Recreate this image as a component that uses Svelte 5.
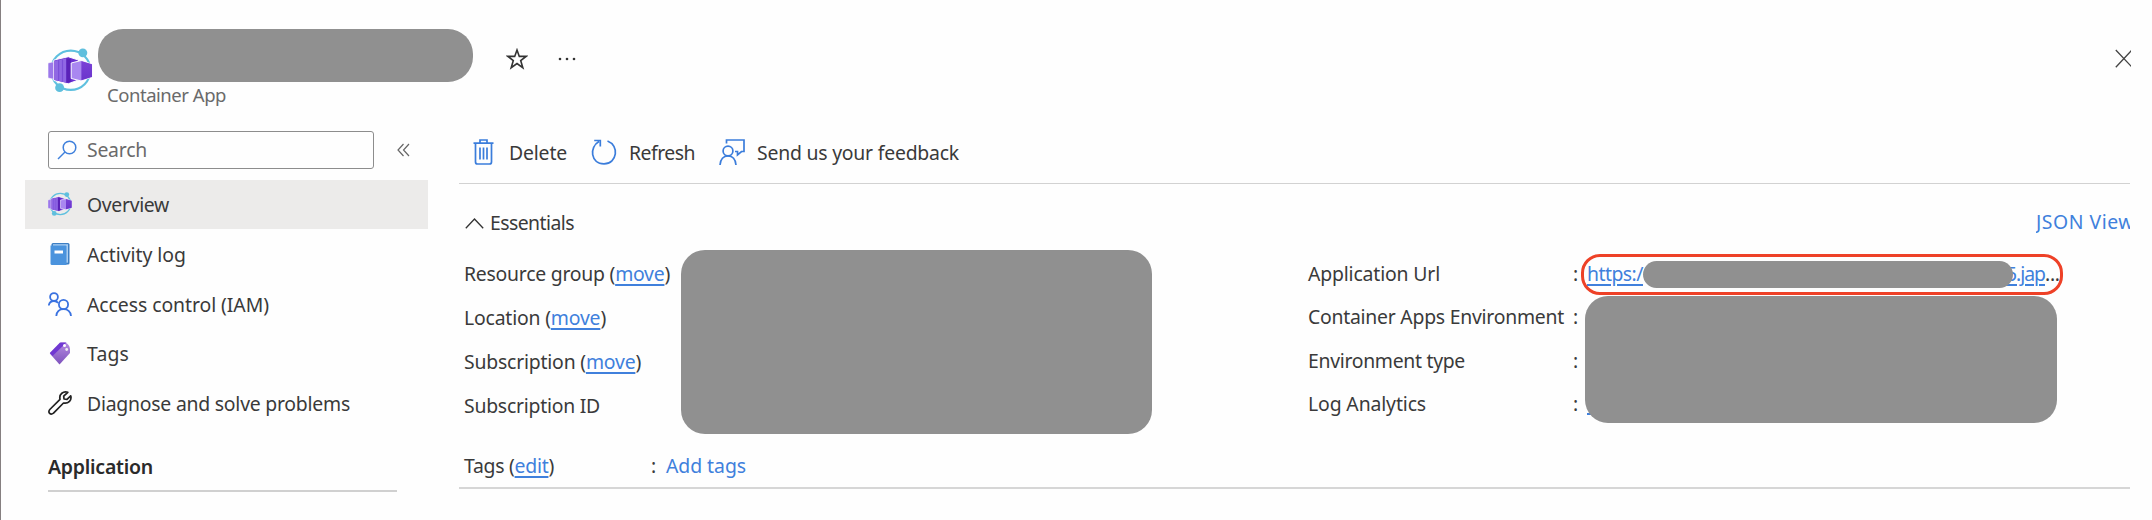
<script lang="ts">
  const menu = [
    { label: 'Overview', icon: 'app', width: 82, active: true },
    { label: 'Activity log', icon: 'log', width: 99 },
    { label: 'Access control (IAM)', icon: 'people', width: 182 },
    { label: 'Tags', icon: 'tag', width: 42 },
    { label: 'Diagnose and solve problems', icon: 'wrench', width: 263 },
  ];
  const left = [
    { label: 'Resource group', action: 'move', width: 206 },
    { label: 'Location', action: 'move', width: 142 },
    { label: 'Subscription', action: 'move', width: 177 },
    { label: 'Subscription ID', width: 136 },
  ];
  const right = [
    { label: 'Application Url', width: 132 },
    { label: 'Container Apps Environment', width: 256 },
    { label: 'Environment type', width: 157 },
    { label: 'Log Analytics', width: 118 },
  ];

  // Tracks a run of text so that it takes up the given width.
  function fit(node: HTMLElement, width: number) {
    const now = node.getBoundingClientRect().width;
    const count = (node.textContent ?? '').length;
    node.style.letterSpacing = `${(width - now) / count}px`;
  }
</script>

{#snippet appIcon(size)}
  <svg width={size} height={size} viewBox="0 0 46 46">
    <defs>
      <linearGradient id="front" x1="0" x2="0" y1="0" y2="1"><stop offset="0" stop-color="#7a42d6" /><stop offset="1" stop-color="#6a35cc" /></linearGradient>
    </defs>
    <circle cx="23.5" cy="23" r="20.3" fill="none" stroke="#5fc0df" stroke-width="2.2" />
    <path d="M0 15.500 7 14V32.500L0 31Z" fill="#9c78ea" stroke="#fff" stroke-width=".6" />
    <path d="M6 12.500 21 9 31.500 12.500V33L21 37 6 33.500Z" fill="#6a2fd0" stroke="#fff" stroke-width="1" />
    <path d="M7 13.300 19 10.500V35.800L7 33Z" fill="#9068e4" />
    <path d="M19 10.500 23.500 11.500V35L19 35.800Z" fill="#5a22b8" />
    <path d="M11 12.500V34M15 11.500V35" stroke="#7b4fd9" stroke-width="1.200" />
    <path d="M24 15.500 34 13 45.500 16.500V30L34 34 24 31.500Z" fill="#a987f0" stroke="#fff" stroke-width="1" />
    <path d="M34.500 13.500 45.500 16.800V30L34.500 33.300Z" fill="url(#front)" />
    <circle cx="36" cy="5" r="4.600" fill="#5fbfdd" />
    <circle cx="12" cy="41" r="4.600" fill="#5fbfdd" />
  </svg>
{/snippet}

<div class="page">
  <header>
    <div class="logo">{@render appIcon(44.5)}</div>
    <div class="heading">
      <div class="mask name"></div>
      <div class="kind"><span use:fit={119}>Container App</span></div>
    </div>
    <svg class="star" width="22" height="22" viewBox="0 0 22 22"><path d="M11 2 13.300 8.400H20.100L14.700 12.600 16.800 19.700 11 15.500 5.200 19.700 7.300 12.600 1.900 8.400H8.700Z" fill="none" stroke="#333" stroke-width="1.600" /></svg>
    <svg class="dots" width="20" height="4" viewBox="0 0 20 4" fill="#333"><circle cx="3" cy="2" r="1.300" /><circle cx="10" cy="2" r="1.300" /><circle cx="17" cy="2" r="1.300" /></svg>
    <svg class="close" width="16" height="20" viewBox="0 0 16 20"><path d="M.8 1 17 18.200M.8 18.200 17 1" stroke="#444" stroke-width="1.300" /></svg>
  </header>

  <div class="body">
    <nav>
      <div class="searchline">
        <div class="search">
          <svg width="20" height="20" viewBox="0 0 20 20" fill="none" stroke="#3f80dc" stroke-width="1.500"><circle cx="12.500" cy="7.500" r="6.300" /><path d="M8 12 1 19" /></svg>
          <span use:fit={60}>Search</span>
        </div>
        <svg class="collapse" width="13" height="14" viewBox="0 0 13 14" fill="none" stroke="#666" stroke-width="1.200"><path d="M6.500 1 1 7l5.500 6M12 1 6.500 7l5.500 6" /></svg>
      </div>
      <ul>
        {#each menu as item}
          <li class:active={item.active}>
            <span class="ico">
              {#if item.icon === 'app'}
                {@render appIcon(24)}
              {:else if item.icon === 'log'}
                <svg width="24" height="24" viewBox="0 0 24 24"><rect x="3.500" y="1" width="18" height="21.500" rx="1.500" fill="#3d7fc4" /><rect x="5" y="2.200" width="15" height="18.500" fill="#a9cdf0" /><path d="M2.500 3.500H17.500Q18.500 3.500 18.500 4.500V23H4Q2.500 23 2.500 21.500Z" fill="#4a93dd" /><rect x="6.500" y="8.500" width="8.500" height="3" fill="#fff" /></svg>
              {:else if item.icon === 'people'}
                <svg width="24" height="24" viewBox="0 0 24 24" fill="none" stroke="#3a72e0" stroke-width="1.800"><circle cx="6" cy="5" r="3.900" /><path d="M.8 13.500C1.200 10.500 3.200 9 6 9 8 9 9.300 9.800 10.200 11" /><circle cx="15.500" cy="12.500" r="4.600" /><path d="M8.300 24C8.800 19.500 11.500 17.200 15.500 17.200S22.400 19.500 23 24" /></svg>
              {:else if item.icon === 'tag'}
                <svg width="24" height="24" viewBox="0 0 24 24"><defs><linearGradient id="tag" x1="0" x2="0" y1="0" y2="1"><stop offset="0" stop-color="#b48be0" /><stop offset="1" stop-color="#7e52bd" /></linearGradient></defs><path d="M13 1.500H17Q21.500 3 22 8V12L11.500 23.500 1.800 12.500Z" fill="url(#tag)" /><path d="M1.800 12 12 1.500H18.500L4.500 15Z" fill="#7038d2" /><circle cx="16.500" cy="4.500" r="1.500" fill="#fff" /><circle cx="18.700" cy="8.500" r="1.400" fill="#eee" /></svg>
              {:else}
                <svg width="24" height="24" viewBox="0 0 24 24" fill="none" stroke="#222" stroke-width="1.700" stroke-linejoin="round"><path d="M19.800 1.300C15.500-.2 10.800 3 12 8.300L1.800 18.500C-.5 21.500 2.500 24.500 5.500 22.200L15.500 12C20.500 13 24 9 22.700 4.800L19 8.300 16 8 15.700 5.200Z" /></svg>
              {/if}
            </span>
            <span class="txt" use:fit={item.width}>{item.label}</span>
          </li>
        {/each}
      </ul>
      <h2><span use:fit={105}>Application</span></h2>
    </nav>

    <main>
      <div class="toolbar">
        <svg width="21" height="26" viewBox="0 0 21 26" fill="none" stroke="#3b7ddb" stroke-width="1.700"><path d="M.5 4.200H20.500M7 4V1H14V4M2.500 4.500V23Q2.500 25 4.500 25H16.500Q18.500 25 18.500 23V4.500M7 8.500V20.500M10.500 8.500V20.500M14 8.500V20.500" /></svg>
        <span class="t1" use:fit={58}>Delete</span>
        <svg class="i2" width="26" height="26" viewBox="0 0 26 26" fill="none" stroke="#3b7ddb" stroke-width="1.700"><path d="M8 2.500C-2 8-.5 24.800 13 24.900 26.500 24.500 28.500 6.500 16.500 2M3.200 1.500H9.300V7.500" /></svg>
        <span class="t2" use:fit={66}>Refresh</span>
        <svg class="i3" width="26" height="26" viewBox="0 0 26 26" fill="none" stroke="#3b7ddb" stroke-width="1.700"><circle cx="9" cy="12" r="4.900" /><path d="M1 26C1.500 20.500 4.500 17 9 17S16.500 20.500 17 26M7.500 4.500V1H25V12.500H22.500L18.500 16V12.500H16" /></svg>
        <span class="t3" use:fit={202}>Send us your feedback</span>
      </div>

      <section>
        <div class="essentials">
          <svg width="19" height="11" viewBox="0 0 19 11" fill="none" stroke="#333" stroke-width="1.300"><path d="M.8 10.300 9.500 1l8.700 9.300" /></svg>
          <span use:fit={84}>Essentials</span>
          <div class="json"><span use:fit={98}>JSON View</span></div>
        </div>
        <div class="columns">
          <div class="labels">
            {#each left as row}
              <div class="row"><span use:fit={row.width}>{row.label}{#if row.action}{' ('}<a href="#move">{row.action}</a>{')'}{/if}</span></div>
            {/each}
          </div>
          <div class="mask values"></div>
          <div class="labels second">
            {#each right as row}
              <div class="row"><span use:fit={row.width}>{row.label}</span><span class="colon">:</span></div>
            {/each}
          </div>
          <div class="results">
            <div class="url">
              <a href="#url" use:fit={56}>https:/</a>
              <div class="mask host"></div>
              <a class="tail" href="#url" use:fit={39}>5.jap</a><span class="ellipsis">...</span>
            </div>
            <div class="envs"><i class="trace"></i><div class="mask env"></div></div>
          </div>
        </div>
        <div class="tags">
          <span class="tagname"><span use:fit={90}>Tags (<a href="#edit">edit</a>)</span></span>
          <span class="tagcolon">:</span>
          <span class="add" use:fit={80}>Add tags</span>
        </div>
      </section>
    </main>
  </div>
</div>

<style>
  :global(body) { background: #fff; }
  .page { box-sizing: border-box; width: 2152px; height: 520px; overflow: hidden; border-left: 1px solid #857f80; background: #fefefe; color: #3a3a3a; font: 19.4px/28px "Noto Sans", "Open Sans", sans-serif; white-space: nowrap; }
  svg { display: block; flex: none; }
  a { color: #4080dc; text-decoration: underline; text-decoration-thickness: 1.5px; text-underline-offset: 3px; }
  .mask { background: #909090; flex: none; }

  header { display: flex; height: 131px; padding-left: 47px; }
  .logo { margin-top: 48px; width: 50px; }
  .heading { margin-top: 29px; width: 375px; }
  .name { height: 53px; border-radius: 25px; }
  .kind { padding-left: 9px; color: #6a6a6a; font-size: 18.500px; line-height: 25px; }
  .star { margin: 48px 0 0 33px; }
  .dots { margin: 57px 0 0 29px; }
  .close { margin: 49px 21px 0 auto; }

  .body { display: flex; }
  nav { width: 434px; flex: none; }
  .searchline { display: flex; align-items: center; padding-left: 47px; }
  .search { box-sizing: border-box; display: flex; align-items: center; gap: 10px; width: 326px; height: 38px; padding-left: 8px; border: 1.500px solid #8d8d8d; border-radius: 3px; color: #6a6a6a; }
  .collapse { margin-left: 23px; }
  ul { list-style: none; margin: 10.500px 0 0 24px; padding: 0; width: 403px; }
  li { display: flex; align-items: center; height: 49.700px; padding-left: 23px; }
  .active { background: #ecebea; }
  .ico { width: 39px; flex: none; }
  .txt { padding-top: 2px; }
  h2 { margin: 25px 0 0 47px; width: 349px; height: 37px; border-bottom: 2px solid #d0d0d0; font-size: 19.500px; line-height: 28px; font-weight: 600; color: #2a2a2a; }

  main { width: 1695px; padding-left: 24px; flex: none; }
  .toolbar { display: flex; align-items: center; box-sizing: border-box; width: 1671px; height: 53px; padding: 0 0 10px 14px; border-bottom: 1.500px solid #d2d2d2; }
  .toolbar span { padding-top: 1px; }
  .t1 { margin-left: 15px; }
  .i2 { margin-left: 24px; }
  .t2 { margin-left: 12px; }
  .i3 { margin-left: 24px; }
  .t3 { margin-left: 12px; }
  section { box-sizing: border-box; width: 1671px; height: 305px; border-bottom: 2px solid #d6d6d6; }
  .essentials { display: flex; align-items: center; padding: 25px 0 0 6px; height: 28px; }
  .essentials > span { margin-left: 6px; }
  .json { margin-left: auto; width: 94px; overflow: hidden; color: #4080dc; position: relative; top: -1px; }
  .columns { display: flex; height: 191px; margin-top: 12px; padding-left: 5px; }
  .labels { width: 217px; }
  .row { display: flex; height: 44px; }
  .labels:first-child { padding-top: 11px; }
  .values { width: 471px; height: 184px; margin-top: 1px; border-radius: 24px; }
  .second { width: 273px; margin-left: 156px; padding-top: 11px; }
  .second .row { height: 43.400px; }
  .colon { margin-left: auto; width: 8px; }
  .results { margin-top: 5px; }
  .url { box-sizing: border-box; display: flex; align-items: center; width: 482px; height: 41px; padding: 0 0 1px 3px; border: 3px solid #ee4127; border-radius: 19px; }
  .url a { flex: none; }
  .host { width: 370px; height: 27px; border-radius: 14px; }
  .tail { margin-left: -7px; }
  .ellipsis { letter-spacing: -.3px; }
  .envs { display: flex; padding: 1px 0 0 4px; position: relative; }
  .env { width: 472px; height: 127px; border-radius: 23px; }
  .trace { position: absolute; left: 6px; top: 118px; width: 6px; height: 1.500px; background: #4080dc; }
  .env, .host { z-index: 1; position: relative; }
  .tags { display: flex; padding-left: 5px; margin-top: 12px; }
  .tagname { width: 187px; }
  .tagcolon { width: 15px; }
  .add { color: #4080dc; }
</style>
